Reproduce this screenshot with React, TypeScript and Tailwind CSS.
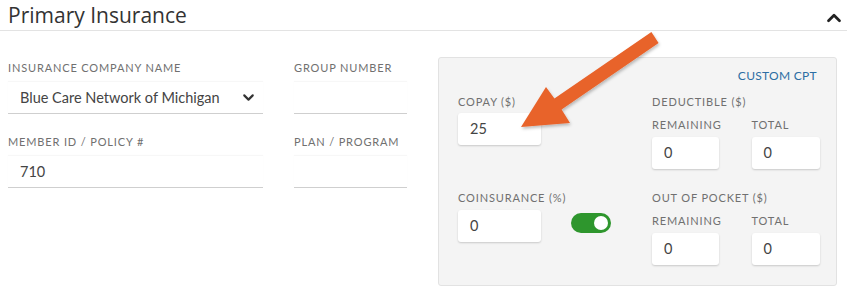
import { ChevronDown, ChevronUp } from "lucide-react";

const label = "text-[11px] leading-[15px] tracking-[0.85px] text-[#707070] uppercase whitespace-nowrap";
const box =
  "bg-white rounded-[3px] shadow-[0_1px_2px_rgba(0,0,0,0.18)] h-8 flex items-center px-3 text-[14.5px] text-[#444]";

function LineField({ name, value, width, chevron }: { name: string; value?: string; width: string; chevron?: boolean }) {
  return (
    <div className={width}>
      <div className={label}>{name}</div>
      <div className="mt-[7px] h-8 flex items-center justify-between pl-3 pr-[6px] border-b border-[#cfcfcf] shadow-[0_-1px_1px_rgba(0,0,0,0.03)] text-[14.5px] text-[#444]">
        <span>{value}</span>
        {chevron && <ChevronDown size={17} strokeWidth={3} className="text-[#333]" />}
      </div>
    </div>
  );
}

function Box({ value, width }: { value: string; width: string }) {
  return <div className={`${box} ${width}`}>{value}</div>;
}

function Toggle() {
  return (
    <div className="w-10 h-5 rounded-full bg-[#2e962d] flex items-center justify-end pr-[3px]">
      <div className="w-[14px] h-[14px] rounded-full bg-white" />
    </div>
  );
}

function SplitPair({ title }: { title: string }) {
  return (
    <div>
      <div className={label}>{title}</div>
      <div className="flex gap-[30px] mt-2">
        <div>
          <div className={label}>Remaining</div>
          <Box value="0" width="w-[67px] mt-[5px]" />
        </div>
        <div>
          <div className={label}>Total</div>
          <Box value="0" width="w-[68px] mt-[5px]" />
        </div>
      </div>
    </div>
  );
}

export default function App() {
  return (
    <div className="relative w-[847px] h-[298px] bg-white overflow-hidden" style={{ fontFamily: "Lato, 'Open Sans', sans-serif" }}>
      <div className="flex items-center justify-between h-[31px] border-b border-[#e3e3e3] pl-2 pr-[2px]">
        <h2 className="text-[21px] leading-[28px] text-[#333]" style={{ fontFamily: "'Open Sans', sans-serif" }}>
          Primary Insurance
        </h2>
        <ChevronUp size={22} strokeWidth={3} className="text-[#222] mt-[5px]" />
      </div>

      <div className="flex pl-2 pt-[26px]">
        <div className="flex flex-col gap-[20px] pt-[3px]">
          <div className="flex gap-[31px]">
            <LineField name="Insurance Company Name" value="Blue Care Network of Michigan" width="w-[255px]" chevron />
            <LineField name="Group Number" width="w-[113px]" />
          </div>
          <div className="flex gap-[31px]">
            <LineField name="Member ID / Policy #" value="710" width="w-[255px]" />
            <LineField name="Plan / Program" width="w-[113px]" />
          </div>
        </div>

        <div className="ml-[31px] w-[399px] h-[229px] shrink-0 bg-[#f4f4f4] border border-[#e2e2e2] rounded-[3px] pl-[19px] pr-[19px] pt-[10px]">
          <div className="flex justify-end">
            <span className="text-[12px] leading-4 tracking-[0.3px] text-[#2c6ea3]">CUSTOM CPT</span>
          </div>
          <div className="flex mt-[10px]">
            <div className="w-[194px] shrink-0">
              <div className={label}>Copay ($)</div>
              <Box value="25" width="w-[83px] mt-[4px]" />
            </div>
            <SplitPair title="Deductible ($)" />
          </div>
          <div className="flex mt-[21px]">
            <div className="w-[194px] shrink-0">
              <div className={label}>Coinsurance (%)</div>
              <div className="flex items-center gap-[30px] mt-[5px]">
                <Box value="0" width="w-[83px]" />
                <div className="-mt-[6px]">
                  <Toggle />
                </div>
              </div>
            </div>
            <SplitPair title="Out of Pocket ($)" />
          </div>
        </div>
      </div>

      <svg className="absolute left-0 top-0 pointer-events-none" width="847" height="298">
        <defs>
          <filter id="sh" x="-20%" y="-20%" width="140%" height="140%">
            <feDropShadow dx="1" dy="2" stdDeviation="1.5" floodColor="#000" floodOpacity="0.25" />
          </filter>
        </defs>
        <polygon
          points="651.4,32 658.6,43 561.6,109.4 570,123 521,127 546,87 554.4,98.6"
          fill="#e8632b"
          filter="url(#sh)"
        />
      </svg>
    </div>
  );
}
